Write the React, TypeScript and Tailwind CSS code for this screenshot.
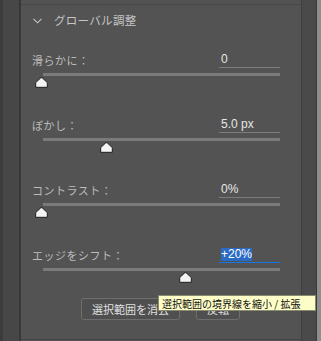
import React from "react";

const font = { fontFamily: '"Noto Sans CJK JP", "Noto Sans", sans-serif' };

function Thumb({ left }: { left: number }) {
  return (
    <svg
      width="13"
      height="11"
      viewBox="0 0 13 11"
      className="absolute top-[1px]"
      style={{ left }}
    >
      <path
        d="M6.5 0.7 Q7.1 0.7 7.6 1.2 L12.3 5.6 V10.3 H0.7 V5.6 L5.4 1.2 Q5.9 0.7 6.5 0.7Z"
        fill="#f4f4f4"
        stroke="#1e1e1e"
        strokeWidth="1"
      />
    </svg>
  );
}

function Row({
  label,
  value,
  thumb,
  active,
}: {
  label: string;
  value: string;
  thumb: number;
  active?: boolean;
}) {
  return (
    <div className="h-[65px] flex flex-col">
      <div className="flex items-end justify-between pr-[21px]">
        <span className="text-[11px] leading-[16px] text-[#bcbcbc] tracking-[0.5px]">{label}</span>
        <div
          className={
            "w-[61px] h-[17px] border-b flex items-center pl-[2px] " +
            (active ? "border-[#1b74e4]" : "border-[#7c7c7c]")
          }
        >
          <span
            className={
              "text-[12px] leading-[13px] px-[0px] " +
              (active ? "bg-[#2b6bc4] text-white" : "text-[#e6e6e6]")
            }
            style={{ fontFamily: '"Liberation Sans", Arial, sans-serif' }}
          >
            {value}
          </span>
        </div>
      </div>
      <div className="relative mt-[5px] pr-[21px] pl-[11px]">
        <div className="h-[3px] bg-[#7a7a7a]" />
        <div className="relative h-[12px] -ml-[11px]">
          <Thumb left={thumb} />
        </div>
      </div>
    </div>
  );
}

export default function App() {
  return (
    <div className="w-[321px] h-[341px] flex bg-[#535353] overflow-hidden" style={font}>
      <div className="w-[3px] bg-[#3c3c3c]" />
      <div className="w-[16px] bg-[#474747]" />
      <div className="w-[2px] bg-[#383838]" />
      <div className="w-[280px] flex flex-col bg-[#535353] relative">
        <div className="h-[4px]" />
        <div className="h-[1px] bg-[#474747]" />
        <div className="h-[32px] flex items-center pl-[12px]">
          <svg width="9" height="6" viewBox="0 0 9 6" className="mr-[12px]">
            <path d="M0.5 0.8 L4.5 4.8 L8.5 0.8" fill="none" stroke="#c4c4c4" strokeWidth="1.1" />
          </svg>
          <span className="text-[11.5px] text-[#c6c6c6] tracking-[0.3px]">グローバル調整</span>
        </div>
        <div className="h-[14px]" />
        <div className="pl-[11px]">
          <Row label="滑らかに：" value="0" thumb={3} />
          <Row label="ぼかし：" value="5.0 px" thumb={68} />
          <Row label="コントラスト：" value="0%" thumb={3} />
          <Row label="エッジをシフト：" value="+20%" thumb={147} active />
        </div>
        <div className="mt-[-13px] flex justify-center gap-[16px] pr-[1px]">
          <div className="w-[99px] h-[22px] border border-[#6e6e6e] rounded-[3px] bg-[#4f4f4f] flex items-center justify-center text-[11px] text-[#e0e0e0]">
            選択範囲を消去
          </div>
          <div className="w-[44px] h-[22px] border border-[#6e6e6e] rounded-[3px] bg-[#4f4f4f] flex items-center justify-center text-[11px] text-[#e0e0e0]">
            反転
          </div>
        </div>
        <div className="flex-1" />
        <div className="h-[1px] bg-[#444444] mb-[1px]" />
        <div className="absolute left-[137px] top-[295px] h-[16px] w-[158px] bg-[#fdfdc8] border border-[#8a8a70] flex items-center pl-[3px] text-[10px] text-[#111] whitespace-nowrap">
          選択範囲の境界線を縮小 / 拡張
        </div>
      </div>
      <div className="w-[1px] bg-[#404040]" />
      <div className="w-[14px] bg-[#4a4a4a]" />
      <div className="w-[1px] bg-[#3a3a3a]" />
      <div className="flex-1 bg-[#8e8e8e]" />
    </div>
  );
}
